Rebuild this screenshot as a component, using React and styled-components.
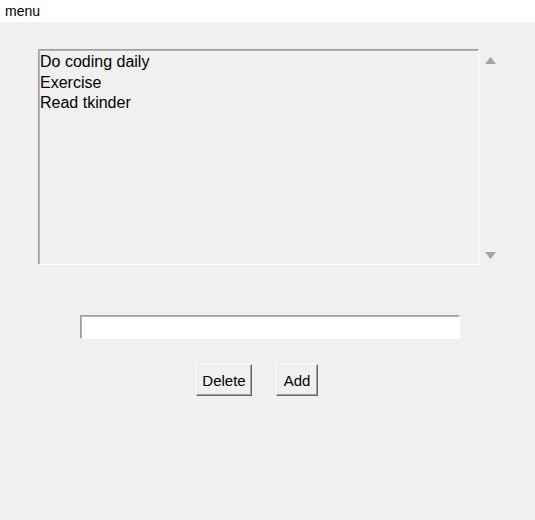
import React, { useState } from "react";
import styled, { createGlobalStyle } from "styled-components";

const GlobalStyle = createGlobalStyle`
  html, body {
    margin: 0;
    padding: 0;
    background: #f0f0f0;
  }
  body {
    font-family: "Liberation Sans", Arial, sans-serif;
  }
`;

const App = () => {
  const [items] = useState(["Do coding daily", "Exercise", "Read tkinder"]);
  const [entry, setEntry] = useState("");

  return (
    <Window>
      <GlobalStyle />
      <MenuBar>menu</MenuBar>
      <Body>
        <ListRow>
          <ListBox>
            {items.map((item) => (
              <ListItem key={item}>{item}</ListItem>
            ))}
          </ListBox>
          <ScrollBar>
            <Arrow viewBox="0 0 11 7">
              <path d="M5.5 0 L11 7 L0 7 Z" fill="#a3a3a3" />
            </Arrow>
            <Arrow viewBox="0 0 11 7">
              <path d="M0 0 L11 0 L5.5 7 Z" fill="#a3a3a3" />
            </Arrow>
          </ScrollBar>
        </ListRow>
        <EntryRow>
          <Entry value={entry} onChange={(e) => setEntry(e.target.value)} />
        </EntryRow>
        <ButtonRow>
          <Button $width={56}>Delete</Button>
          <Button $width={42}>Add</Button>
        </ButtonRow>
      </Body>
    </Window>
  );
};

export default App;

const Window = styled.div`
  width: 535px;
  height: 520px;
  background: #f0f0f0;
  overflow: hidden;
`;

const MenuBar = styled.div`
  height: 22px;
  line-height: 23px;
  background: #ffffff;
  padding-left: 5px;
  font-size: 14px;
  color: #000;
`;

const Body = styled.div`
  display: flex;
  flex-direction: column;
`;

const ListRow = styled.div`
  display: flex;
  margin-top: 27px;
  padding-left: 38px;
`;

const ListBox = styled.div`
  box-sizing: border-box;
  width: 441px;
  height: 216px;
  border-style: solid;
  border-width: 1px;
  border-color: #a0a0a0 #ffffff #ffffff #a0a0a0;
  box-shadow: inset 1px 1px 0 #b4b4b4;
  padding: 2px 2px 0 1px;
`;

const ListItem = styled.div`
  font-size: 16px;
  line-height: 20.5px;
  color: #000;
  white-space: nowrap;
`;

const ScrollBar = styled.div`
  width: 17px;
  height: 216px;
  margin-left: 3px;
  display: flex;
  flex-direction: column;
  justify-content: space-between;
  align-items: center;
  padding: 8px 0 6px;
  box-sizing: border-box;
`;

const Arrow = styled.svg`
  width: 11px;
  height: 7px;
  display: block;
`;

const EntryRow = styled.div`
  display: flex;
  margin-top: 50px;
  padding-left: 80px;
`;

const Entry = styled.input`
  box-sizing: border-box;
  width: 380px;
  height: 24px;
  margin: 0;
  padding: 1px 3px;
  background: #ffffff;
  border-style: solid;
  border-width: 1px;
  border-color: #a0a0a0 #ffffff #ffffff #a0a0a0;
  box-shadow: inset 1px 1px 0 #b4b4b4;
  outline: none;
  font-family: "Liberation Sans", Arial, sans-serif;
  font-size: 14px;
`;

const ButtonRow = styled.div`
  display: flex;
  gap: 24px;
  margin-top: 25px;
  padding-left: 196px;
`;

const Button = styled.button`
  box-sizing: border-box;
  width: ${(p) => p.$width}px;
  height: 32px;
  margin: 0;
  padding: 0;
  background: #f0f0f0;
  border-style: solid;
  border-width: 1px;
  border-color: #ffffff #696969 #696969 #ffffff;
  box-shadow: inset -1px -1px 0 #a0a0a0, inset 1px 1px 0 #e3e3e3;
  border-radius: 0;
  font-family: "Liberation Sans", Arial, sans-serif;
  font-size: 15px;
  color: #000;
  cursor: pointer;
`;
